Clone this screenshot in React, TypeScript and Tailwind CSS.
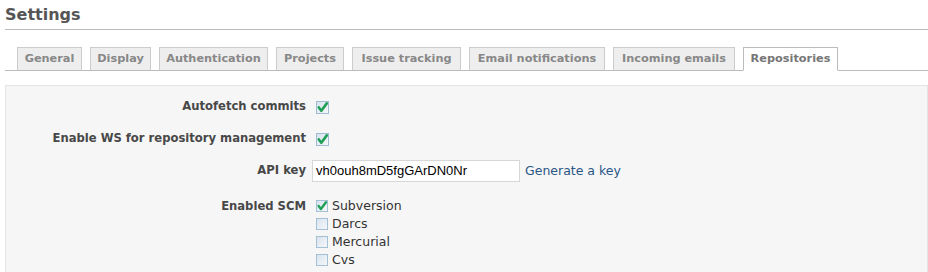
import React from "react";

const tabs = [
  { name: "General", w: 65 },
  { name: "Display", w: 61 },
  { name: "Authentication", w: 109 },
  { name: "Projects", w: 68 },
  { name: "Issue tracking", w: 109 },
  { name: "Email notifications", w: 136 },
  { name: "Incoming emails", w: 122 },
  { name: "Repositories", w: 95, active: true },
];

function Box({ checked, size = 13 }: { checked?: boolean; size?: number }) {
  return (
    <svg width={size} height={size} viewBox="0 0 13 13" className="shrink-0 block">
      <defs>
        <linearGradient id={"g" + (checked ? "c" : "u") + size} x1="0" y1="0" x2="1" y2="1">
          <stop offset="0" stopColor="#d6e2ee" />
          <stop offset="1" stopColor="#f7f9fb" />
        </linearGradient>
      </defs>
      <rect x="0.5" y="0.5" width="12" height="12" fill={`url(#g${checked ? "c" : "u"}${size})`} stroke="#9fbcd3" />
      {checked && (
        <path d="M2.8 6.4 L5.3 9.8 L10.8 2.4" fill="none" stroke="#1f9f55" strokeWidth="2.6" strokeLinecap="round" strokeLinejoin="round" />
      )}
    </svg>
  );
}

export default function App() {
  return (
    <div className="w-[928px] h-[272px] overflow-hidden bg-white" style={{ fontFamily: '"DejaVu Sans", Verdana, sans-serif' }}>
      <div className="ml-[5px] h-[30px] border-b border-[#bbbbbb] text-[#555555] font-bold text-[16px] leading-[30px]">
        Settings
      </div>
      <div className="ml-[5px] mt-[17px] border-b border-[#bbbbbb] flex items-end pl-[12px] gap-[8px] h-[24px]">
        {tabs.map((t) => (
          <div
            key={t.name}
            style={{ width: t.w }}
            className={
              "h-[24px] -mb-px flex items-center justify-center border text-[11.3px] font-bold leading-none whitespace-nowrap " +
              (t.active
                ? "bg-white border-[#bbbbbb] border-b-white text-[#777777]"
                : "bg-[#eeeeee] border-[#cccccc] border-b-[#bbbbbb] text-[#888888]")
            }
          >
            {t.name}
          </div>
        ))}
      </div>
      <div className="ml-[5px] mt-[14px] h-[200px] bg-[#f6f6f6] border border-[#e4e4e4] pt-[11px] text-[11.6px]">
        <div className="flex items-center h-[20px]">
          <div className="w-[300px] text-right font-bold text-[#484848]">Autofetch commits</div>
          <div className="ml-[10px]"><Box checked /></div>
        </div>
        <div className="flex items-center h-[20px] mt-[12px]">
          <div className="w-[300px] text-right font-bold text-[#484848]">Enable WS for repository management</div>
          <div className="ml-[10px]"><Box checked /></div>
        </div>
        <div className="flex items-center h-[22px] mt-[11px]">
          <div className="w-[300px] text-right font-bold text-[#484848]">API key</div>
          <div className="ml-[6px] w-[208px] h-[22px] bg-white border border-[#d7d7d7] flex items-center px-[3px] text-[13px] text-black" style={{ fontFamily: '"Liberation Sans", Arial, sans-serif' }}>
            vh0ouh8mD5fgGArDN0Nr
          </div>
          <span className="ml-[5px] text-[#2a5685] text-[12.5px]">Generate a key</span>
        </div>
        <div className="flex mt-[15px]">
          <div className="w-[300px] text-right font-bold text-[#484848] h-[18px] leading-[18px]">Enabled SCM</div>
          <div className="ml-[10px] flex flex-col">
            {[
              ["Subversion", true],
              ["Darcs", false],
              ["Mercurial", false],
              ["Cvs", false],
            ].map(([n, c]) => (
              <div key={n as string} className="flex items-center h-[18px] text-[#333333] text-[12.5px]">
                <Box checked={c as boolean} size={12} />
                <span className="ml-[4px]">{n as string}</span>
              </div>
            ))}
          </div>
        </div>
      </div>
    </div>
  );
}
